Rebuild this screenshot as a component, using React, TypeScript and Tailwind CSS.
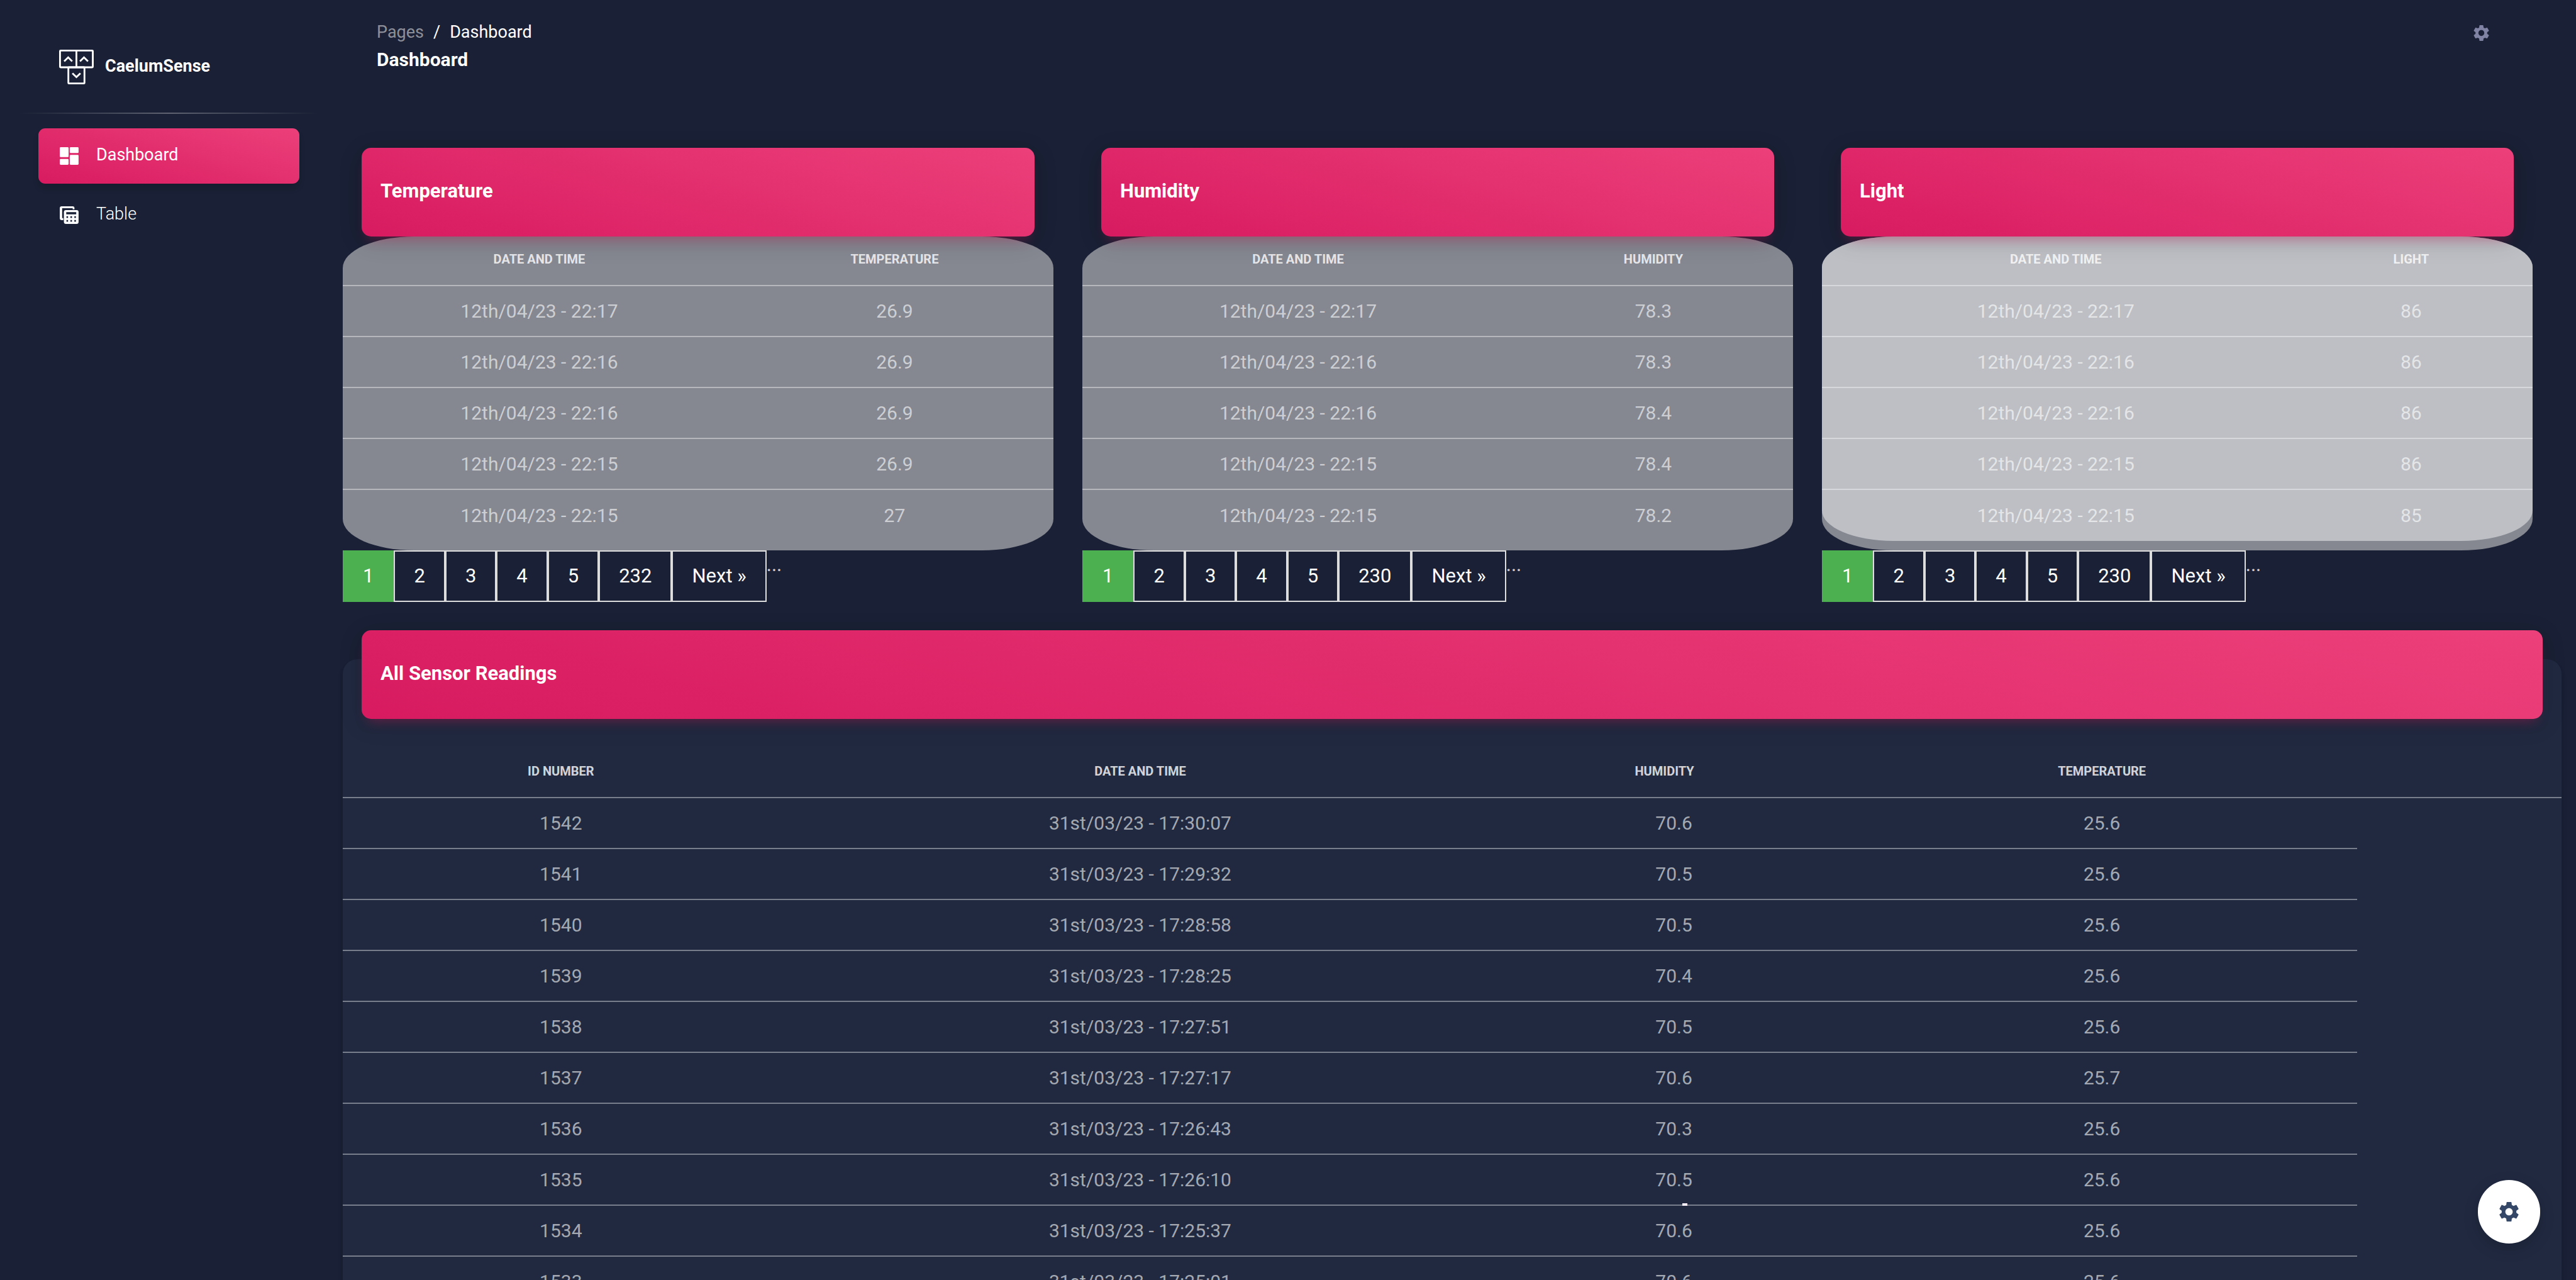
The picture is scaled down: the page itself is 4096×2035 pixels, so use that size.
import type { ReactNode } from "react";
import { MdSettings } from "react-icons/md";

type Reading = [string, string];

const timestamps = [
  "12th/04/23 - 22:17",
  "12th/04/23 - 22:16",
  "12th/04/23 - 22:16",
  "12th/04/23 - 22:15",
  "12th/04/23 - 22:15",
];

const withTimes = (values: string[]): Reading[] =>
  values.map((value, i) => [timestamps[i], value]);

const sensors = [
  {
    title: "Temperature",
    rows: withTimes(["26.9", "26.9", "26.9", "26.9", "27"]),
    lastPage: "232",
    firstColumn: "w-[55.3%]",
    tableTone: "",
  },
  {
    title: "Humidity",
    rows: withTimes(["78.3", "78.3", "78.4", "78.4", "78.2"]),
    lastPage: "230",
    firstColumn: "w-[60.7%]",
    tableTone: "",
  },
  {
    title: "Light",
    rows: withTimes(["86", "86", "86", "86", "85"]),
    lastPage: "230",
    firstColumn: "w-[65.8%]",
    tableTone: "rounded-[10%] bg-[#bdbfc5]",
  },
];

const readings = [
  ["1542", "31st/03/23 - 17:30:07", "70.6", "25.6"],
  ["1541", "31st/03/23 - 17:29:32", "70.5", "25.6"],
  ["1540", "31st/03/23 - 17:28:58", "70.5", "25.6"],
  ["1539", "31st/03/23 - 17:28:25", "70.4", "25.6"],
  ["1538", "31st/03/23 - 17:27:51", "70.5", "25.6"],
  ["1537", "31st/03/23 - 17:27:17", "70.6", "25.7"],
  ["1536", "31st/03/23 - 17:26:43", "70.3", "25.6"],
  ["1535", "31st/03/23 - 17:26:10", "70.5", "25.6"],
  ["1534", "31st/03/23 - 17:25:37", "70.6", "25.6"],
  ["1533", "31st/03/23 - 17:25:01", "70.6", "25.6"],
];

function Logo() {
  return (
    <svg viewBox="0 0 58 58" className="size-[55px]" fill="none" stroke="white" strokeWidth="3" aria-hidden="true">
      <rect x="1.5" y="1.5" width="55" height="28" rx="1" />
      <path d="M29 1.5v28" />
      <rect x="15.5" y="29.5" width="27" height="27" rx="1" />
      <path d="M8.5 19.5l6.7-6.5 6.7 6.5M35 19.5l6.7-6.5 6.7 6.5M22.3 39.5l6.7 6.5 6.7-6.5" />
    </svg>
  );
}

function DashboardIcon() {
  return (
    <svg viewBox="0 0 32 30" className="h-[28px] w-[30px]" fill="white" aria-hidden="true">
      <rect x="0" y="0" width="15" height="17" rx="1.5" />
      <rect x="17" y="0" width="15" height="10" rx="1.5" />
      <rect x="0" y="20" width="15" height="10" rx="1.5" />
      <rect x="17" y="13" width="15" height="17" rx="1.5" />
    </svg>
  );
}

function TableIcon() {
  return (
    <svg viewBox="0 0 32 30" className="h-[28px] w-[30px]" aria-hidden="true">
      <path
        fill="white"
        d="M3.5 0H22a3.2 3.2 0 0 1 3 3.2V5H22V3.3H4V20h2v3.6H3.5A3.5 3.5 0 0 1 0 20V3.4A3.4 3.4 0 0 1 3.5 0Z"
      />
      <rect x="7" y="6.5" width="25" height="23.5" rx="3.5" fill="white" />
      <path
        fill="#1a2035"
        d="M11 10h17v3.6H11zM11.4 16.8h2.7v3h-2.7zM18.1 16.8h2.7v3h-2.7zM24.8 16.8h2.7v3h-2.7zM11.4 23.3h2.7v3h-2.7zM18.1 23.3h2.7v3h-2.7zM24.8 23.3h2.7v3h-2.7z"
      />
    </svg>
  );
}

function NavItem({ icon, label, active = false }: { icon: ReactNode; label: string; active?: boolean }) {
  const tone = active
    ? "bg-[linear-gradient(195deg,#ec407a,#d81b60)] font-normal shadow-[0_8px_12px_-2px_rgba(0,0,0,0.15)]"
    : "font-light";
  return (
    <a
      href="#"
      aria-current={active ? "page" : undefined}
      className={`flex h-[88px] items-center gap-[28px] rounded-[11px] pl-[34px] text-[27px] leading-[36px] text-white ${tone}`}
    >
      {icon}
      <span className="pb-[4px]">{label}</span>
    </a>
  );
}

function Sidebar() {
  return (
    <aside className="w-[507px] shrink-0 pl-[30px]">
      <a href="#" className="flex h-[179px] items-start gap-[18px] pt-[79px] pl-[64px] text-white">
        <Logo />
        <span className="pt-[8px] text-[27px] font-bold leading-[36px]">CaelumSense</span>
      </a>
      <div className="h-[2px] bg-[linear-gradient(90deg,transparent,rgba(255,255,255,0.3),transparent)]" />
      <nav className="flex flex-col gap-[6px] pt-[23px] pr-[31px] pl-[31px]">
        <NavItem icon={<DashboardIcon />} label="Dashboard" active />
        <NavItem icon={<TableIcon />} label="Table" />
      </nav>
    </aside>
  );
}

function CardTitle({ children }: { children: ReactNode }) {
  return (
    <div className="relative z-10 mx-[30px] flex h-[141px] items-center rounded-[15px] bg-[linear-gradient(195deg,#ec407a,#d81b60)] px-[30px] pb-[3px] shadow-[0_8px_38px_rgba(0,0,0,0.14),0_13px_19px_-10px_rgba(233,30,99,0.4)]">
      <h2 className="text-[31px] font-bold leading-[48px] text-white">{children}</h2>
    </div>
  );
}

const headCell = "border-b-2 border-white/40 pb-[5px] text-center text-[20px] font-bold leading-[32px] text-white/80 uppercase";
const bodyCell = "text-center text-[30px] leading-[46px] text-white/60";

function SensorCard({ title, rows, lastPage, firstColumn, tableTone }: (typeof sensors)[number]) {
  return (
    <section>
      <CardTitle>{title}</CardTitle>
      <div className="rounded-[10%] bg-[#858791] pb-[15px]">
        <div className={tableTone}>
          <table className="w-full table-fixed border-separate border-spacing-0">
            <thead>
              <tr className="h-[79px]">
                <th className={`${headCell} ${firstColumn}`}>Date and Time</th>
                <th className={headCell}>{title}</th>
              </tr>
            </thead>
            <tbody>
              {rows.map(([time, value], i) => {
                const line = i < rows.length - 1 ? "border-b-2 border-white/40" : "";
                return (
                  <tr key={i} className="h-[81px]">
                    <td className={`${bodyCell} ${line}`}>{time}</td>
                    <td className={`${bodyCell} ${line}`}>{value}</td>
                  </tr>
                );
              })}
            </tbody>
          </table>
        </div>
      </div>
      <nav aria-label={`${title} pages`} className="flex items-start text-[31px] leading-[46px]">
        {["1", "2", "3", "4", "5", lastPage, "Next »"].map((page) => (
          <a
            key={page}
            href="#"
            className={`flex h-[82px] items-center border-2 px-[30px] text-white ${
              page === "1" ? "border-[#4caf50] bg-[#4caf50]" : "border-[#dddddd]"
            }`}
          >
            {page}
          </a>
        ))}
        <span className="text-white/80">...</span>
      </nav>
    </section>
  );
}

function AllReadings() {
  return (
    <section className="mt-[91px] rounded-[23px] bg-[#202940] shadow-[0_8px_12px_-2px_rgba(0,0,0,0.1),0_4px_8px_-2px_rgba(0,0,0,0.06)]">
      <div className="-translate-y-[46px]">
        <CardTitle>All Sensor Readings</CardTitle>
        <table className="mt-[47px] w-full table-fixed border-separate border-spacing-0">
          <thead>
            <tr className="h-[79px]">
              <th className={`${headCell} w-[19.66%]`}>ID Number</th>
              <th className={`${headCell} w-[32.56%]`}>Date and Time</th>
              <th className={`${headCell} w-[15.55%] pr-[30px]`}>Humidity</th>
              <th className={`${headCell} w-[23.03%]`}>Temperature</th>
              <th className={headCell} aria-label="Actions" />
            </tr>
          </thead>
          <tbody>
            {readings.map(([id, time, humidity, temperature]) => (
              <tr key={id} className="h-[81px]">
                <td className={`${bodyCell} border-b-2 border-white/40`}>{id}</td>
                <td className={`${bodyCell} border-b-2 border-white/40`}>{time}</td>
                <td className={`${bodyCell} relative border-b-2 border-white/40`}>
                  {humidity}
                  {id === "1535" && (
                    <span className="absolute -bottom-[2px] left-1/2 ml-[13px] h-[4px] w-[8px] bg-[#fdeffb]" />
                  )}
                </td>
                <td className={`${bodyCell} border-b-2 border-white/40`}>{temperature}</td>
              </tr>
            ))}
          </tbody>
        </table>
      </div>
    </section>
  );
}

export default function App() {
  return (
    <div className="flex h-screen overflow-hidden bg-[#1a2035] font-['Roboto',sans-serif]">
      <Sidebar />
      <main className="min-w-0 flex-1 pr-[23px] pl-[38px]">
        <header className="flex h-[235px] items-start justify-between pt-[31px] pr-[112px] pl-[54px]">
          <div>
            <nav aria-label="Breadcrumb" className="flex gap-[15px] text-[27px] leading-[40px]">
              <a href="#" className="text-white/50">Pages</a>
              <span className="text-white">/</span>
              <span className="text-white">Dashboard</span>
            </nav>
            <h1 className="text-[30px] font-bold leading-[48px] text-white">Dashboard</h1>
          </div>
          <button type="button" aria-label="Settings" className="mt-[6px] text-[#8083a3]">
            <MdSettings className="size-[31px]" />
          </button>
        </header>
        <div className="grid grid-cols-3">
          {sensors.map((sensor) => (
            <div key={sensor.title} className="pr-[46px]">
              <SensorCard {...sensor} />
            </div>
          ))}
        </div>
        <AllReadings />
      </main>
      <button
        type="button"
        aria-label="Open configurator"
        className="fixed right-[57px] bottom-[58px] z-20 flex h-[101px] w-[99px] items-center justify-center rounded-full bg-white text-[#344767] shadow-[0_8px_24px_rgba(0,0,0,0.16)]"
      >
        <MdSettings className="size-[39px]" />
      </button>
    </div>
  );
}
